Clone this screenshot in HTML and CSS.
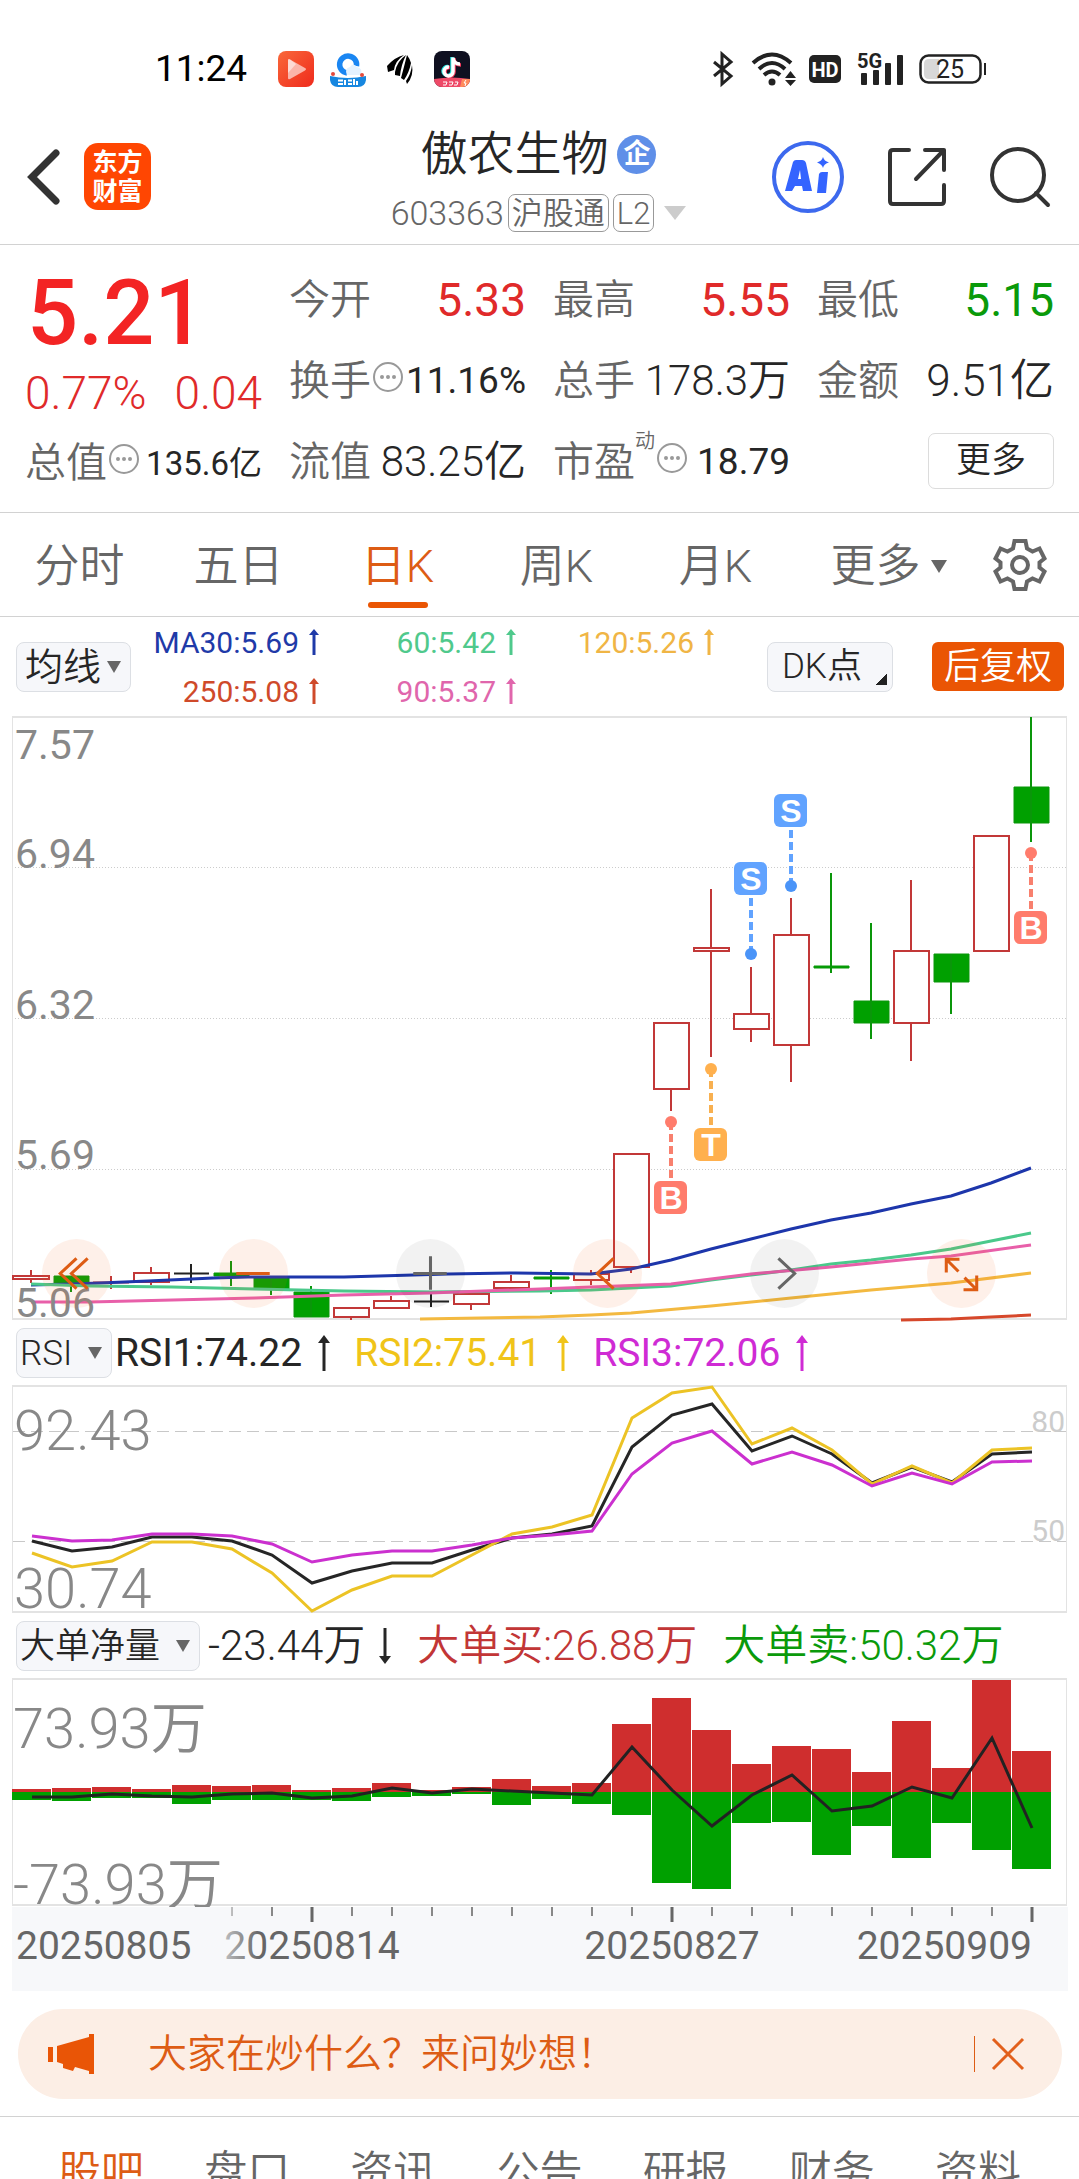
FILE: index.html
```html
<!DOCTYPE html>
<html lang="zh-CN">
<head>
<meta charset="utf-8">
<meta name="viewport" content="width=device-width, initial-scale=1">
<title>傲农生物 603363</title>
<link rel="stylesheet" href="styles.css">
</head>
<body>
<div class="app">

<div class="status">
  <time class="status-time">11:24</time>
  <div class="status-apps">
    <svg width="36" height="36" viewBox="0 0 36 36"><defs><linearGradient id="play" x1="0" y1="0" x2="1" y2="1"><stop offset="0" stop-color="#f9683a"/><stop offset="1" stop-color="#ef2a1c"/></linearGradient></defs><rect width="36" height="36" rx="8" fill="url(#play)"/><path d="M10 9.500q0-2 2-1L27 17q2 1 0 2.500L12 28q-2 1-2-1z" fill="#fbb5aa"/><path d="M10 9.500q0-2 2-1L18 13l-8 9z" fill="#fddad4"/></svg>
    <svg width="36" height="36" viewBox="0 0 36 36"><path d="M17 22a8.500 8.500 0 1 1 9.500-7" fill="none" stroke="#1a86f2" stroke-width="5.500"/><path d="M17 24q-3-7 3-8 3-5 7 0 6 1 4 8z" fill="#e4f2ff"/><path d="M0 25q18 4 36 0v4q-1 7-8 7H8q-7 0-8-7z" fill="#1687e0"/><path d="M8 29.500h5M8 33h5M15 29v5M18 29.500h4M18 33h4M24 28v6M27 30v4" stroke="#fff" stroke-width="2"/><circle cx="3" cy="23" r="2" fill="#e34a3b"/><circle cx="32" cy="24" r="2" fill="#e34a3b"/></svg>
    <svg class="wing" width="26" height="30" viewBox="0 0 26 30"><path d="M0 12Q8 3 17 1 8 7 7 16L1 18zM8 18Q10 7 19 1 14 11 13 22L8 21zM14 24Q17 13 20 1 23 5 24 9 22 19 17 26zM19 27Q24 20 25 11 27 22 20 30z" fill="#000"/></svg>
    <svg width="36" height="36" viewBox="0 0 36 36"><defs><clipPath id="tk"><rect width="36" height="36" rx="8"/></clipPath></defs><g clip-path="url(#tk)"><rect width="36" height="36" fill="#0f1020"/><path d="M0 28q18-3 36 0v8H0z" fill="#ee4a68"/><path d="M28 28h8v8h-10z" fill="#ff8b5c"/></g><g fill="none" stroke-width="3.500"><path d="M18 6v14a4.500 4.500 0 1 1-4-4.500M18 7q1 6 7 6" stroke="#25e5e0"/><path d="M20 7v14a4.500 4.500 0 1 1-4-4.500M20 8q1 6 7 6" stroke="#f63c5f"/><path d="M19 6.500v14a4.500 4.500 0 1 1-4-4.500M19 7q1 6 7 6" stroke="#fff"/></g><path d="M9 31h4l-1 3H9M15 31h4l-1 3h-3M21 31h3l-1 3h-3M32 29l-2 3h2l-1 3" stroke="#fff" fill="none"/></svg>
  </div>
  <div class="status-right">
    <svg width="22" height="34" viewBox="0 0 22 34"><path d="M2 10l17 14-9 8V2l9 8L2 24" fill="none" stroke="#222" stroke-width="3"/></svg>
    <svg class="wifi" width="44" height="34" viewBox="0 0 44 34"><g fill="none" stroke="#222" stroke-width="4"><path d="M1 11q19-17 38 0"/><path d="M7 17q13-12 26 0"/><path d="M12 23q8-7 16 0"/></g><circle cx="20" cy="30" r="3.500" fill="#222"/><path d="M33 26l5.500-7 5.500 7zM33 28h11l-5.500 6z" fill="#222"/></svg>
    <svg class="hd" width="32" height="28" viewBox="0 0 32 28"><rect width="32" height="28" rx="5" fill="#222"/><text x="16" y="22" text-anchor="middle" class="hd-text">HD</text></svg>
    <svg class="signal" width="48" height="34" viewBox="0 0 48 34"><g fill="#222"><rect x="4" y="21" width="6" height="12" rx="1"/><rect x="16" y="18" width="6" height="15" rx="1"/><rect x="28" y="11" width="6" height="22" rx="1"/><rect x="40" y="3" width="6" height="30" rx="1"/></g><text x="0" y="16" class="sig-text">5G</text></svg>
    <svg width="68" height="30" viewBox="0 0 68 30"><rect x="1.500" y="1.500" width="60" height="27" rx="8" fill="#fff" stroke="#222" stroke-width="2.500"/><path d="M10 5h10v20H10q-5 0-5-5V10q0-5 5-5z" fill="#d8d8d8"/><rect x="65" y="9" width="2" height="12" fill="#222"/><text x="31" y="24" text-anchor="middle" class="bat-text">25</text></svg>
  </div>
</div>

<header class="header">
  <div class="header-left">
    <button class="icon-btn" aria-label="返回"><svg width="33" height="56" viewBox="0 0 33 56"><path d="M29 4L5 28l24 24" fill="none" stroke="#333" stroke-width="7" stroke-linecap="round"/></svg></button>
    <a class="logo" href="#"><span>东方</span><span>财富</span></a>
  </div>
  <div class="header-title">
    <h1 class="name">傲农生物<span class="badge">企</span></h1>
    <div class="code"><span>603363</span><span class="tag">沪股通</span><span class="tag">L2</span><i class="tri-code"></i></div>
  </div>
  <div class="header-right">
    <button class="icon-btn" aria-label="AI"><svg width="72" height="74" viewBox="0 0 72 74"><circle cx="36" cy="37" r="34" fill="none" stroke="#3d69ee" stroke-width="4"/><path d="M21 22q1-2 3-2h6q3 0 4 3l6 28h-9l-1-5h-7l-3 5h-7zM26 39h3l-1-9z" fill="#3464ff" fill-rule="evenodd"/><path d="M47 34q1-2 3-2h6l-2 21h-9z" fill="#3464ff"/><path d="M51 17q1 4 6 5.500-5 1-6 5.500-1-4-6-5.500 5-1.500 6-5.500z" fill="#3464ff"/></svg></button>
    <button class="icon-btn" aria-label="分享"><svg width="58" height="58" viewBox="0 0 58 58"><g fill="none" stroke="#333" stroke-width="4" stroke-linecap="round" stroke-linejoin="round"><path d="M21 2H5Q2 2 2 5v48q0 3 3 3h48q3 0 3-3V37"/><path d="M37 2h19v20M56 2L28 31"/></g></svg></button>
    <button class="icon-btn" aria-label="搜索"><svg width="60" height="60" viewBox="0 0 60 60"><circle cx="28" cy="28" r="26" fill="none" stroke="#333" stroke-width="4"/><path d="M46 46l12 12" stroke="#333" stroke-width="4" stroke-linecap="round"/></svg></button>
  </div>
</header>

<section class="quote">
  <div class="col">
    <div class="price up">5.21</div>
    <div class="change up"><span>0.77%</span><span>0.04</span></div>
    <div class="item"><span class="label">总值</span><svg class="info" viewBox="0 0 30 30"><circle cx="15" cy="15" r="14"/><path d="M9 15h0M15 15h0M21 15h0"/></svg><span class="val v-s">135.6亿</span></div>
  </div>
  <div class="col">
    <div class="item"><span class="label">今开</span><span class="val v-l up">5.33</span></div>
    <div class="item"><span class="label">换手</span><svg class="info" viewBox="0 0 30 30"><circle cx="15" cy="15" r="14"/><path d="M9 15h0M15 15h0M21 15h0"/></svg><span class="val v-m">11.16%</span></div>
    <div class="item"><span class="label">流值</span><span class="val">83.25亿</span></div>
  </div>
  <div class="col">
    <div class="item"><span class="label">最高</span><span class="val v-l up">5.55</span></div>
    <div class="item"><span class="label">总手</span><span class="val">178.3万</span></div>
    <div class="item"><span class="label">市盈</span><small class="dyn">动</small><svg class="info" viewBox="0 0 30 30"><circle cx="15" cy="15" r="14"/><path d="M9 15h0M15 15h0M21 15h0"/></svg><span class="val v-m">18.79</span></div>
  </div>
  <div class="col">
    <div class="item"><span class="label">最低</span><span class="val v-l down">5.15</span></div>
    <div class="item"><span class="label">金额</span><span class="val v-x">9.51亿</span></div>
    <div class="item end"><button class="more">更多</button></div>
  </div>
</section>

<nav class="tabs">
  <button class="tab">分时</button>
  <button class="tab">五日</button>
  <button class="tab active">日K</button>
  <button class="tab">周K</button>
  <button class="tab">月K</button>
  <button class="tab">更多<i class="tri"></i></button>
  <button class="tab gear" aria-label="设置"><svg width="52" height="52" viewBox="0 0 52 52"><path d="M20.500 2h11l1.500 7.500 5.500 3 7-3 5 10-5 4v5l5 4-5 10-7-3-5.500 3L31.500 50h-11L19 42.500l-5.500-3-7 3-5-10 5-4v-5l-5-4 5-10 7 3 5.500-3z" fill="none" stroke="#666" stroke-width="4"/><circle cx="26" cy="26" r="8" fill="none" stroke="#666" stroke-width="4"/></svg></button>
</nav>

<div class="ma">
  <span class="drop drop-ma"><select aria-label="均线"><option>均线</option></select></span>
  <div class="ma-grid">
    <span class="c-blue">MA30:5.69<svg class="arr" viewBox="0 0 10 26"><path d="M5 26V5"/><path class="head" d="M0 6l5-6 5 6z"/></svg></span>
    <span class="c-green">60:5.42<svg class="arr" viewBox="0 0 10 26"><path d="M5 26V5"/><path class="head" d="M0 6l5-6 5 6z"/></svg></span>
    <span class="c-amber">120:5.26<svg class="arr" viewBox="0 0 10 26"><path d="M5 26V5"/><path class="head" d="M0 6l5-6 5 6z"/></svg></span>
    <span class="c-red">250:5.08<svg class="arr" viewBox="0 0 10 26"><path d="M5 26V5"/><path class="head" d="M0 6l5-6 5 6z"/></svg></span>
    <span class="c-pink">90:5.37<svg class="arr" viewBox="0 0 10 26"><path d="M5 26V5"/><path class="head" d="M0 6l5-6 5 6z"/></svg></span>
  </div>
  <button class="dk">DK点<i class="corner"></i></button>
  <button class="adj">后复权</button>
</div>

<div class="chart">
  <svg class="plot" viewBox="12 716 1056 604" role="img" aria-label="日K线图">
    <g class="dots"><path d="M12 867.500H1067M12 1018.500H1067M12 1169.500H1067"/></g>
    <g class="frame"><path d="M12.500 717V1319M1066.500 717V1319"/><path d="M12 717H1067M12 1319H1067" stroke-width="2"/></g>
    <g class="k-up">
      <rect x="13" y="1276" width="36" height="3"/><path d="M31 1270v6M31 1280v3"/>
      <path d="M93 1282.500h36M111 1276v13"/>
      <rect x="134" y="1273" width="35" height="9"/><path d="M151 1267v6M151 1282v3"/>
      <rect x="334" y="1308" width="35" height="9"/><path d="M351 1317v3"/>
      <rect x="374" y="1301" width="35" height="7"/><path d="M391 1296v5"/>
      <rect x="454" y="1294" width="35" height="10"/><path d="M471 1304v6"/>
      <rect x="494" y="1282" width="35" height="6"/><path d="M511 1275v7"/>
      <rect x="574" y="1274" width="35" height="6"/><path d="M591 1270v4M591 1280v5"/>
      <rect x="614" y="1154" width="35" height="113"/><path d="M631 1267v6"/>
      <rect x="654" y="1023" width="35" height="66"/><path d="M671 1089v22"/>
      <rect x="694" y="948" width="35" height="3"/><path d="M711 889v59M711 951v106"/>
      <rect x="734" y="1014" width="35" height="15"/><path d="M751 967v47M751 1029v13"/>
      <rect x="774" y="935" width="35" height="110"/><path d="M791 898v37M791 1045v37"/>
      <rect x="894" y="951" width="35" height="72"/><path d="M911 880v71M911 1023v38"/>
      <rect x="974" y="836" width="35" height="115"/>
    </g>
    <g class="k-down">
      <path d="M54 1276h35v8H54zM214 1273h35v3h-35zM254 1278h35v11h-35zM294 1292h35v25h-35zM534 1277h35v2h-35zM814 966h35v2h-35zM854 1001h35v22h-35zM934 954h35v28h-35zM1014 787h35v36h-35z"/>
      <path d="M71 1276v16M231 1261v25M271 1278v17M311 1286v31M551 1270v24M831 873v100M871 923v116M951 954v60M1031 717v125"/>
    </g>
    <g class="k-flat"><path d="M174 1273.500h35M191 1264v19M414 1301.500h35M431 1293v14"/></g>
    <g class="ma-line">
      <polyline stroke="#1d36ab" points="31,1285 71,1284 100,1283 148,1281 213,1278 248,1277 344,1277 448,1274 516,1273 591,1274 631,1269 671,1260 711,1249 751,1239 791,1229 831,1220 871,1213 911,1204 951,1196 991,1183 1031,1168"/>
      <polyline stroke="#4ac98b" points="31,1284 90,1286 172,1287 255,1289 344,1291 431,1292 540,1291 591,1290 631,1288 671,1286 711,1280 751,1275 791,1270 831,1264 871,1260 911,1255 951,1249 991,1241 1031,1233"/>
      <polyline stroke="#e85fa9" points="31,1302 90,1302 255,1298 344,1295 430,1293 540,1289 591,1287 671,1284 751,1274 831,1267 911,1259 951,1256 1031,1245"/>
      <polyline stroke="#f3b940" points="420,1319 540,1317 591,1315 631,1313 711,1306 791,1298 871,1290 951,1283 1031,1273"/>
      <polyline stroke="#d6482b" points="901,1320 951,1319 991,1317 1031,1315"/>
    </g>
    <g class="axis-text"><text x="15" y="759">7.57</text><text x="15" y="868">6.94</text><text x="15" y="1019">6.32</text><text x="15" y="1169">5.69</text><text x="15" y="1317">5.06</text></g>
    <g class="mark m-s"><path d="M751 898v56"/><circle cx="751" cy="954" r="6"/><rect x="734" y="862" width="33" height="33" rx="6"/><text x="751" y="890">S</text></g>
    <g class="mark m-s"><path d="M791 830v56"/><circle cx="791" cy="886" r="6"/><rect x="774" y="794" width="33" height="33" rx="6"/><text x="791" y="822">S</text></g>
    <g class="mark m-b"><path d="M671 1178v-56"/><circle cx="671" cy="1122" r="6"/><rect x="654" y="1181" width="33" height="33" rx="6"/><text x="671" y="1209">B</text></g>
    <g class="mark m-t"><path d="M711 1125v-56"/><circle cx="711" cy="1069" r="6"/><rect x="694" y="1128" width="33" height="33" rx="6"/><text x="711" y="1156">T</text></g>
    <g class="mark m-b"><path d="M1031 909v-56"/><circle cx="1031" cy="853" r="6"/><rect x="1014" y="911" width="33" height="33" rx="6"/><text x="1031" y="939">B</text></g>
  </svg>
  <div class="pad">
    <button class="round" aria-label="最左"><svg viewBox="0 0 68 68"><path d="M34 19L18 34l16 15M45 19L29 34l16 15"/></svg></button>
    <button class="round" aria-label="缩小"><svg viewBox="0 0 68 68"><path d="M17 34h33"/></svg></button>
    <button class="round gray" aria-label="放大"><svg viewBox="0 0 68 68"><path d="M17 34h33M34 17v33"/></svg></button>
    <button class="round" aria-label="左移"><svg viewBox="0 0 68 68"><path d="M40 19L24 34l16 15"/></svg></button>
    <button class="round gray" aria-label="右移"><svg viewBox="0 0 68 68"><path d="M28 19l16 15-16 15"/></svg></button>
    <button class="round" aria-label="全屏"><svg viewBox="0 0 68 68"><path d="M19 33V20h13M19 20l12 12M36 50h13V36M49 50L37 38"/></svg></button>
  </div>
</div>

<div class="legend">
  <span class="drop"><select aria-label="指标"><option>RSI</option></select></span>
  <span class="lg rsi c-black">RSI1:74.22<svg class="arr arr-l" viewBox="0 0 12 36"><path d="M6 36V7"/><path class="head" d="M0 8l6-8 6 8z"/></svg></span>
  <span class="lg rsi c-gold">RSI2:75.41<svg class="arr arr-l" viewBox="0 0 12 36"><path d="M6 36V7"/><path class="head" d="M0 8l6-8 6 8z"/></svg></span>
  <span class="lg rsi c-purple">RSI3:72.06<svg class="arr arr-l" viewBox="0 0 12 36"><path d="M6 36V7"/><path class="head" d="M0 8l6-8 6 8z"/></svg></span>
</div>

<div class="chart">
  <svg class="plot" viewBox="12 1385 1056 228" role="img" aria-label="RSI">
    <g class="dash"><path d="M13 1431.500H1067M13 1541.500H1067"/></g>
    <g class="frame"><path d="M12.500 1386V1612M1066.500 1386V1612"/><path d="M12 1386H1067M12 1612H1067" stroke-width="2"/></g>
    <g class="axis-text big"><text x="14" y="1450">92.43</text><text x="14" y="1608">30.74</text></g>
    <g class="axis-text pale"><text x="1065" y="1432">80</text><text x="1065" y="1541">50</text></g>
    <g class="rsi-line">
      <polyline stroke="#262626" points="32,1541 72,1551 112,1547 152,1537 192,1537 232,1541 272,1555 312,1583 352,1571 392,1563 432,1563 472,1550 512,1538 552,1534 592,1526 632,1447 672,1415 712,1404 752,1451 792,1436 832,1454 872,1483 912,1467 952,1482 992,1454 1032,1452"/>
      <polyline stroke="#ecc325" points="32,1553 72,1567 112,1561 152,1542 192,1542 232,1549 272,1573 312,1611 352,1590 392,1576 432,1576 472,1555 512,1534 552,1527 592,1515 632,1418 672,1393 712,1387 752,1444 792,1428 832,1450 872,1484 912,1466 952,1483 992,1450 1032,1448"/>
      <polyline stroke="#cb30cf" points="32,1536 72,1541 112,1540 152,1534 192,1534 232,1536 272,1544 312,1562 352,1555 392,1551 432,1551 472,1545 512,1538 552,1535 592,1531 632,1474 672,1443 712,1431 752,1464 792,1452 832,1465 872,1486 912,1473 952,1484 992,1462 1032,1461"/>
    </g>
  </svg>
</div>

<div class="legend">
  <span class="drop"><select aria-label="指标"><option>大单净量</option></select></span>
  <span class="lg net c-black">-23.44万<svg class="arr arr-l" viewBox="0 0 12 36"><path d="M6 0v29"/><path class="head" d="M0 28l6 8 6-8z"/></svg></span>
  <span class="lg c-buy">大单买:26.88万</span>
  <span class="lg c-sell">大单卖:50.32万</span>
</div>

<div class="chart">
  <svg class="plot" viewBox="12 1678 1056 228" role="img" aria-label="大单净量">
    <g class="frame"><path d="M12.500 1679V1905M1066.500 1679V1905"/><path d="M12 1679H1067M12 1905H1067" stroke-width="2"/></g>
    <g class="axis-text big"><text x="13" y="1748">73.93万</text><text x="13" y="1904">-73.93万</text></g>
    <path fill="#cf2e2e" d="M12 1792v-3h39v3zM52 1792v-4h39v4zM92 1792v-5h39v5zM132 1792v-3h39v3zM172 1792v-7h39v7zM212 1792v-6h39v6zM252 1792v-7h39v7zM292 1792v-2h39v2zM332 1792v-4h39v4zM372 1792v-9h39v9zM412 1792v-2h39v2zM452 1792v-5h39v5zM492 1792v-13h39v13zM532 1792v-6h39v6zM572 1792v-9h39v9zM612 1792v-68h39v68zM652 1792v-94h39v94zM692 1792v-62h39v62zM732 1792v-28h39v28zM772 1792v-46h39v46zM812 1792v-43h39v43zM852 1792v-20h39v20zM892 1792v-71h39v71zM932 1792v-24h39v24zM972 1792v-112h39v112zM1012 1792v-41h39v41z"/>
    <path fill="#00a000" d="M12 1792v8h39v-8zM52 1792v9h39v-9zM92 1792v6h39v-6zM132 1792v6h39v-6zM172 1792v12h39v-12zM212 1792v8h39v-8zM252 1792v8h39v-8zM292 1792v8h39v-8zM332 1792v9h39v-9zM372 1792v5h39v-5zM412 1792v4h39v-4zM452 1792v2h39v-2zM492 1792v13h39v-13zM532 1792v7h39v-7zM572 1792v12h39v-12zM612 1792v23h39v-23zM652 1792v91h39v-91zM692 1792v97h39v-97zM732 1792v31h39v-31zM772 1792v30h39v-30zM812 1792v63h39v-63zM852 1792v34h39v-34zM892 1792v66h39v-66zM932 1792v31h39v-31zM972 1792v58h39v-58zM1012 1792v77h39v-77z"/>
    <polyline class="net-line" points="32,1797 72,1797 112,1794 152,1796 192,1797 232,1794 272,1793 312,1798 352,1796 392,1788 432,1793 472,1789 512,1791 552,1793 592,1795 632,1747 672,1790 712,1826 752,1795 792,1775 832,1811 872,1806 912,1787 952,1798 992,1738 1032,1828"/>
  </svg>
  <svg class="plot dates" viewBox="12 1906 1056 85" role="img" aria-label="日期">
    <defs><linearGradient id="fade"><stop offset="0" stop-color="#f7f8fa"/><stop offset="1" stop-color="#f7f8fa" stop-opacity="0"/></linearGradient></defs>
    <rect x="12" y="1907" width="1056" height="84" fill="#f7f8fa"/>
    <path stroke="#888" stroke-width="2" d="M232 1907v9M272 1907v9M352 1907v9M392 1907v9M432 1907v9M472 1907v9M512 1907v9M552 1907v9M592 1907v9M632 1907v9M712 1907v9M752 1907v9M792 1907v9M832 1907v9M872 1907v9M912 1907v9M952 1907v9M992 1907v9"/>
    <path stroke="#666" stroke-width="3" d="M312 1907v15M672 1907v15M1032 1907v15"/>
    <g class="date-text"><text x="312" y="1959" text-anchor="middle">20250814</text><text x="672" y="1959" text-anchor="middle">20250827</text><text x="1032" y="1959" text-anchor="end">20250909</text></g>
    <rect x="200" y="1907" width="60" height="84" fill="url(#fade)"/>
    <g class="date-text"><text x="16" y="1959">20250805</text></g>
  </svg>
</div>

<div class="banner">
  <svg width="46" height="40" viewBox="0 0 46 40"><path d="M0 13h5v15H0zM9 12l32-9V0h5v40h-5v-3l-14-4-2 4-10-3v-4l-6-2z" fill="#e95506"/></svg>
  <a class="banner-text" href="#">大家在炒什么？来问妙想！</a>
  <button class="close" aria-label="关闭"><svg width="32" height="32" viewBox="0 0 32 32"><path d="M1 1l30 30M31 1L1 31" stroke="#e2601c" stroke-width="3"/></svg></button>
</div>

<nav class="bottom">
  <a class="active" href="#">股吧</a><a href="#">盘口</a><a href="#">资讯</a><a href="#">公告</a><a href="#">研报</a><a href="#">财务</a><a href="#">资料</a>
</nav>
</div>
</body>
</html>
```

FILE: styles.css
```css
* { box-sizing: border-box; }
body {
  margin: 0;
  background: #fff;
  color: #262626;
  font-family: Roboto, "Noto Sans CJK SC", sans-serif;
  font-weight: 400;
  line-height: 1.2;
}
.app { display: flex; flex-direction: column; height: 100vh; overflow: hidden; }
.app > * { flex: none; }
button, select { font: inherit; color: inherit; background: none; border: 0; padding: 0; margin: 0; }
a { color: inherit; text-decoration: none; }
svg { display: block; flex: none; overflow: visible; }

.up { color: #e02a2a; }
.down { color: #0a9a0a; }

/* status bar */
.status { display: flex; align-items: center; height: 109px; padding: 29px 92px 0 155px; }
.status-time { font-size: 37px; color: #000; }
.status-apps { display: flex; align-items: center; gap: 16px; margin-left: 31px; }
.wing { margin: 0 5px; }
.status-right { display: flex; align-items: center; margin-left: auto; }
.wifi { margin-left: 18px; }
.hd { margin-left: 13px; }
.signal { margin: 0 14px 0 16px; }
.hd-text { font-size: 20px; font-weight: 700; fill: #fff; }
.sig-text { font-size: 20px; font-weight: 700; fill: #222; stroke: #fff; stroke-width: 3px; paint-order: stroke; }
.bat-text { font-size: 25px; fill: #222; }

/* header */
.header { display: grid; grid-template-columns: 1fr auto 1fr; height: 136px; padding: 0 29px 0 27px; border-bottom: 1px solid #d2d2d2; }
.header-left { display: flex; align-items: center; gap: 24px; }
.header-right { display: flex; align-items: center; justify-content: flex-end; gap: 44px; }
.logo { display: grid; align-content: center; justify-items: center; width: 67px; height: 67px; border-radius: 14px; background: #ff4602; color: #fff; font-size: 25px; line-height: 29px; font-weight: 700; }
.header-title { padding-top: 15px; text-align: center; }
.name { display: flex; align-items: center; justify-content: center; gap: 9px; height: 60px; margin: 0; font-size: 47px; font-weight: 350; }
.badge { display: grid; place-items: center; width: 39px; height: 39px; border-radius: 50%; background: #5f8fe8; color: #fff; font-size: 27px; line-height: 39px; font-weight: 700; }
.code { display: flex; align-items: center; justify-content: center; gap: 4px; height: 58px; color: #666; font-size: 34px; font-weight: 350; }
.tag { height: 38px; padding: 0 3px; border: 1px solid #999; border-radius: 7px; font-size: 31px; line-height: 37px; }
.tri-code { margin-left: 6px; border: 11px solid transparent; border-top: 14px solid #ccc; border-bottom: 0; }

/* quote */
.quote { display: grid; grid-template-columns: repeat(4, 1fr); column-gap: 27px; padding: 13px 25px 10px; border-bottom: 1px solid #d2d2d2; }
.price { height: 108px; padding-left: 2px; color: #f32424; font-size: 90px; font-weight: 500; line-height: 112px; }
.change { display: flex; justify-content: space-between; height: 55px; font-size: 46px; line-height: 55px; font-weight: 350; }
.item { display: flex; align-items: center; height: 81px; padding-top: 4px; white-space: nowrap; font-weight: 350; }
.item.end { justify-content: flex-end; padding-top: 0; }
.label { color: #666; font-size: 41px; }
.val { margin-left: auto; font-size: 42px; }
.v-x { font-size: 44px; }
.v-l { font-size: 46px; }
.v-m { font-size: 37px; }
.v-s { font-size: 33px; font-weight: 400; }
.v-m, .v-l { font-weight: 400; }
.info { width: 30px; height: 30px; margin: 0 0 10px 2px; fill: none; stroke: #999; stroke-width: 2px; }
.info path { stroke-width: 4px; stroke-linecap: round; }
.dyn { align-self: flex-start; padding-top: 5px; color: #666; font-size: 20px; }
.more { width: 126px; height: 56px; border: 1px solid #dcdcdc; border-radius: 7px; font-size: 35px; }

/* period tabs */
.tabs { display: grid; grid-template-columns: repeat(5, 159fr) 187fr 75fr; height: 104px; padding-right: 22px; border-bottom: 1px solid #d2d2d2; color: #666; font-weight: 350; }
.tab { display: flex; align-items: center; justify-content: center; gap: 10px; padding-top: 4px; font-size: 45px; position: relative; }
.tab.gear { padding-top: 0; }
.tab.active { color: #dd5c14; }
.tab.active::after { content: ""; position: absolute; left: 50%; bottom: 8px; width: 60px; height: 6px; margin-left: -30px; border-radius: 3px; background: #ea5504; }
.tri { border: 8px solid transparent; border-top: 13px solid #666; border-bottom: 0; }

/* selects */
.drop { display: inline-grid; align-items: center; height: 50px; border: 1px solid #dcdfe4; border-radius: 8px; background: #f6f7fa; font-weight: 350; }
.drop > select, .drop::after { grid-area: 1 / 1; }
.drop > select { appearance: none; height: 48px; padding: 2px 38px 0 3px; font-size: 35px; outline: 0; }
.drop::after { content: ""; justify-self: end; margin-right: 9px; border: 7px solid transparent; border-top: 12px solid #666; border-bottom: 0; pointer-events: none; }
.drop-ma > select { padding: 2px 28px 0 8px; font-size: 38px; }

/* moving averages */
.ma { display: flex; align-items: center; height: 99px; padding: 0 15px 0 16px; }
.ma-grid { display: grid; grid-template-columns: 188px 197px 198px; line-height: 49px; font-size: 30px; }
.ma-grid > span { display: flex; align-items: center; justify-content: flex-end; gap: 10px; }
.arr { width: 10px; height: 26px; fill: none; stroke: currentColor; stroke-width: 3px; }
.head { fill: currentColor; stroke: none; }
.arr-l { width: 12px; height: 36px; }
.c-blue { color: #1f3aa8; }
.c-green { color: #4fc98c; }
.c-amber { color: #f0b545; }
.c-red { color: #cf4a2a; }
.c-pink { color: #e066ac; }
.dk { display: flex; align-items: center; gap: 13px; height: 50px; margin-left: auto; padding: 0 5px 0 14px; border: 1px solid #dcdfe4; border-radius: 8px; background: #f6f7fa; font-size: 35px; font-weight: 350; }
.corner { align-self: flex-end; width: 12px; height: 12px; margin-bottom: 6px; background: linear-gradient(135deg, transparent 50%, #222 50%); }
.adj { height: 49px; margin-left: 39px; padding: 2px 12px 0; border-radius: 6px; background: #ea5504; color: #fff; font-size: 36px; font-weight: 350; }

/* charts */
.chart { position: relative; padding: 0 11px 0 12px; }
.plot { width: 100%; height: auto; }
.dates { position: relative; }
.frame { fill: none; stroke: #e3e3e3; }
.dots { stroke: #ccc; stroke-dasharray: 1 2; }
.dash { stroke: #c8c8c8; stroke-dasharray: 12 6; }
.axis-text { fill: #888; font-size: 41px; }
.axis-text.big { font-size: 56px; font-weight: 350; }
.axis-text.pale { fill: #ccc; font-size: 30px; text-anchor: end; }
.date-text { fill: #666; font-size: 39px; }
.k-up { fill: #fff; stroke: #c23838; stroke-width: 2px; }
.k-down { fill: #00a000; stroke: #0a960a; stroke-width: 2px; }
.k-down path:first-child { stroke-width: 1px; }
.k-flat { stroke: #222; stroke-width: 2px; }
.ma-line, .rsi-line { fill: none; stroke-width: 3px; }
.net-line { fill: none; stroke: #222; stroke-width: 3px; }
.mark path { stroke-width: 4px; stroke-dasharray: 8 4; }
.mark text { fill: #fff; stroke: none; font: 700 32px "Liberation Sans", sans-serif; text-anchor: middle; }
.m-s { fill: #61a3ff; }
.m-s path { stroke: #61a3ff; }
.m-s circle { fill: #4a94f8; }
.m-b { fill: #ff7c6c; }
.m-b path { stroke: #f8806e; }
.m-t { fill: #ffb04e; }
.m-t path { stroke: #f8b050; }
.pad { position: absolute; left: 42px; right: 83px; bottom: 12px; display: flex; justify-content: space-between; }
.round { width: 69px; height: 69px; border-radius: 50%; background: rgba(250, 110, 40, .1); color: #dd5c14; }
.round.gray { background: rgba(0, 0, 0, .05); color: #666; }
.round svg { width: 69px; height: 69px; fill: none; stroke: currentColor; stroke-width: 3px; }

/* indicator legends */
.legend { display: flex; align-items: center; height: 65px; padding-left: 16px; white-space: nowrap; }
.lg { display: flex; align-items: center; gap: 14px; margin-right: 26px; padding-top: 2px; font-size: 42px; font-weight: 350; }
.lg.rsi { gap: 16px; margin-right: 24px; font-size: 39px; font-weight: 400; }
.drop + .lg { margin-left: 3px; }
.drop + .lg.net { margin-left: 8px; }
.c-black { color: #262626; }
.c-gold { color: #f0c419; }
.c-purple { color: #cf2bd4; }
.c-buy { color: #c23636; }
.c-sell { color: #0a9a0a; }

/* banner */
.banner { display: flex; align-items: center; height: 90px; margin: 18px 17px 17px 18px; padding: 0 38px 0 30px; border-radius: 45px; background: #fceee5; color: #dd5c14; font-weight: 350; }
.banner-text { margin-left: 54px; font-size: 39px; }
.close { display: flex; align-items: center; height: 36px; margin-left: auto; padding-left: 17px; border-left: 1px solid #dd5c14; }

/* bottom tabs */
.bottom { display: grid; grid-template-columns: repeat(7, 1fr); padding: 23px 28px 0; border-top: 1px solid #d2d2d2; color: #666; font-size: 43px; line-height: 64px; font-weight: 350; text-align: center; }
.bottom .active { color: #dd5c14; }
```
